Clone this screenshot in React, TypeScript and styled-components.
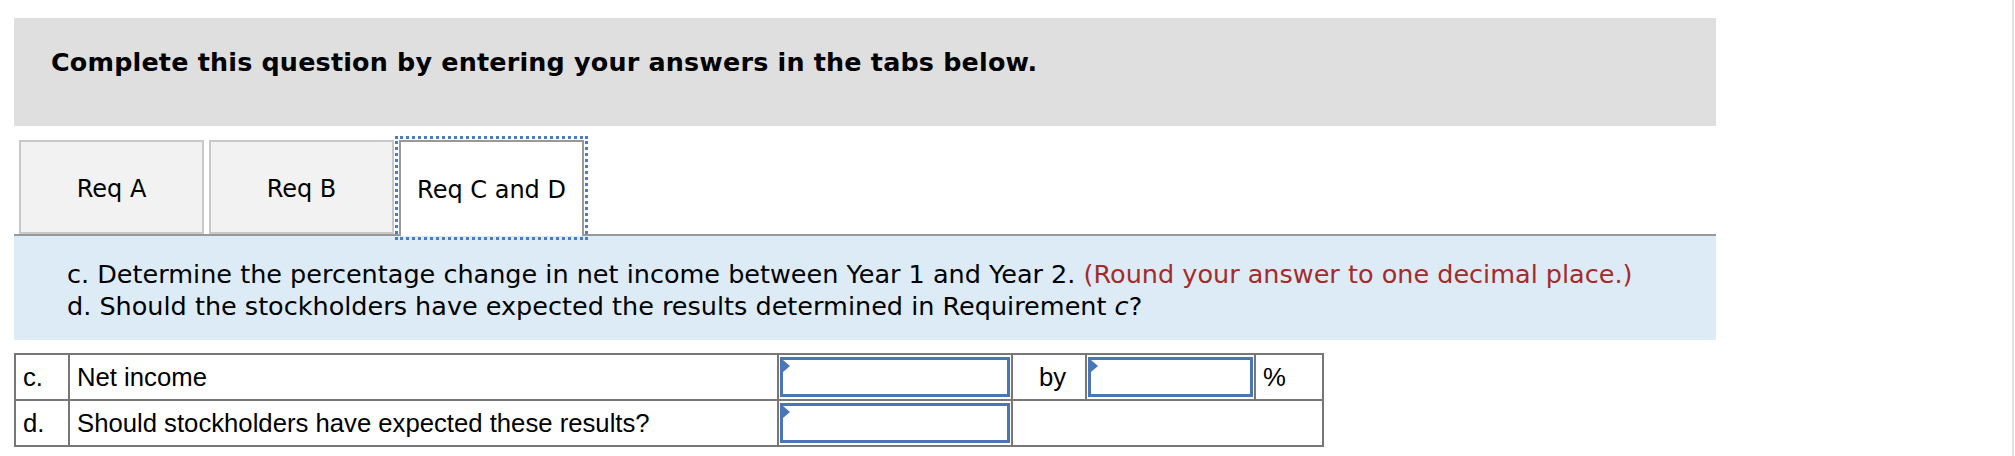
import React from "react";
import styled, { createGlobalStyle } from "styled-components";

const Global = createGlobalStyle`
  html, body { margin: 0; padding: 0; background: #fff; }
  body { font-family: "DejaVu Sans", Verdana, sans-serif; color: #000; }
`;

const Page = styled.div`
  box-sizing: border-box;
  width: 2014px;
  min-height: 456px;
  padding: 18px 0 0 14px;
  border-right: 2px solid #e2e2e2;
`;

const Banner = styled.div`
  box-sizing: border-box;
  width: 1702px;
  height: 108px;
  background: #dfdfdf;
  padding: 30px 0 0 37px;
`;

const Heading = styled.h2`
  margin: 0;
  font-family: "DejaVu Sans", Verdana, sans-serif;
  font-weight: bold;
  font-size: 25.4px;
  line-height: 29px;
  letter-spacing: 0.2px;
`;

const TabBar = styled.div`
  box-sizing: border-box;
  width: 1702px;
  margin-top: 14px;
  padding-left: 5px;
  display: flex;
  align-items: flex-start;
  gap: 5px;
  border-bottom: 2px solid #999;
  height: 96px;
`;

const Tab = styled.button<{ $active?: boolean }>`
  box-sizing: border-box;
  width: 185px;
  height: ${(p) => (p.$active ? "96px" : "94px")};
  margin: 0;
  padding: ${(p) => (p.$active ? "2px 0 0" : "4px 0 0")};
  font-family: "DejaVu Sans", Verdana, sans-serif;
  font-size: 24px;
  color: #000;
  background: ${(p) => (p.$active ? "#fff" : "#f2f2f2")};
  border: 2px solid ${(p) => (p.$active ? "#999" : "#c8c8c8")};
  border-bottom: ${(p) => (p.$active ? "none" : "2px solid #c8c8c8")};
  outline: ${(p) => (p.$active ? "3px dotted #4a7cc2" : "none")};
  outline-offset: 1px;
  position: relative;
  z-index: ${(p) => (p.$active ? 1 : 0)};
  cursor: pointer;
`;

const Panel = styled.div`
  box-sizing: border-box;
  width: 1702px;
  height: 104px;
  background: #ddebf7;
  padding: 22px 0 0 53px;
  font-family: "DejaVu Sans", Verdana, sans-serif;
  font-size: 25.5px;
  line-height: 32px;
  white-space: nowrap;
`;

const Note = styled.span`
  color: #a52a2a;
`;

const AnswerTable = styled.table`
  margin-top: 13px;
  border-collapse: collapse;
  border: 2px solid #777;
  font-family: "Liberation Sans", Arial, sans-serif;
  font-size: 25.7px;
`;

const Cell = styled.td<{ $w?: number; $align?: string }>`
  box-sizing: border-box;
  border: 2px solid #777;
  height: 46px;
  padding: 0 0 0 7px;
  text-align: ${(p) => p.$align || "left"};
  ${(p) => (p.$w ? `width: ${p.$w}px;` : "")}
`;

const InputCell = styled.td<{ $w: number }>`
  box-sizing: border-box;
  border: 2px solid #777;
  height: 46px;
  width: ${(p) => p.$w}px;
  padding: 1px;
`;

const InputBox = styled.div`
  position: relative;
  box-sizing: border-box;
  height: 40px;
  border: 3px solid #4a76b8;
  background: #fff;
  &::before {
    content: "";
    position: absolute;
    left: 0;
    top: 0;
    border-top: 6px solid transparent;
    border-bottom: 6px solid transparent;
    border-left: 7px solid #4a76b8;
  }
`;

export default function App() {
  return (
    <>
      <Global />
      <Page>
        <Banner>
          <Heading>Complete this question by entering your answers in the tabs below.</Heading>
        </Banner>
        <TabBar>
          <Tab>Req A</Tab>
          <Tab>Req B</Tab>
          <Tab $active>Req C and D</Tab>
        </TabBar>
        <Panel>
          c. Determine the percentage change in net income between Year 1 and Year 2.{" "}
          <Note>(Round your answer to one decimal place.)</Note>
          <br />
          d. Should the stockholders have expected the results determined in Requirement <i>c</i>?
        </Panel>
        <AnswerTable>
          <tbody>
            <tr>
              <Cell $w={54}>c.</Cell>
              <Cell $w={709}>Net income</Cell>
              <InputCell $w={234}>
                <InputBox />
              </InputCell>
              <Cell $w={74} $align="center">by</Cell>
              <InputCell $w={169}>
                <InputBox />
              </InputCell>
              <Cell $w={68}>%</Cell>
            </tr>
            <tr>
              <Cell>d.</Cell>
              <Cell>Should stockholders have expected these results?</Cell>
              <InputCell $w={234}>
                <InputBox />
              </InputCell>
              <Cell colSpan={3} />
            </tr>
          </tbody>
        </AnswerTable>
      </Page>
    </>
  );
}
